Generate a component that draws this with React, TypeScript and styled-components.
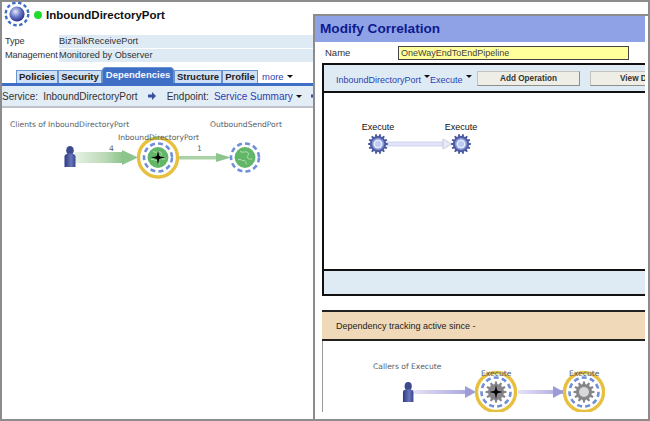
import React from 'react';
import styled, { createGlobalStyle } from 'styled-components';

const GlobalStyle = createGlobalStyle`
  html, body {
    margin: 0;
    padding: 0;
    background: #fff;
  }
  body {
    font-family: "Liberation Sans", Arial, sans-serif;
    color: #222;
  }
`;

const Frame = styled.div`
  width: 650px;
  height: 421px;
  box-sizing: border-box;
  display: flex;
  border: 2px solid #8c8c8c;
  background: #fff;
  overflow: hidden;
`;

const LeftPane = styled.div`
  width: 311px;
  flex: none;
  overflow: hidden;
`;

const Header = styled.div`
  height: 29px;
  display: flex;
  align-items: center;
  padding: 0 0 4px 2px;
  box-sizing: border-box;
`;

const StatusDot = styled.span`
  width: 8px;
  height: 8px;
  border-radius: 50%;
  background: #1fdc2c;
  margin: 0 4px 0 4px;
`;

const Title = styled.h1`
  margin: 0;
  font-size: 11.5px;
  font-weight: 700;
  color: #111;
`;

const InfoList = styled.div`
  display: flex;
  flex-direction: column;
  gap: 1px;
  padding-top: 4px;
`;

const InfoRow = styled.div`
  height: 13px;
  display: flex;
  font-size: 9.2px;
  line-height: 13px;
`;

const InfoLabel = styled.div`
  width: 57px;
  padding-left: 3px;
  box-sizing: border-box;
  flex: none;
  color: #333;
  white-space: nowrap;
  letter-spacing: -0.1px;
`;

const InfoValue = styled.div`
  flex: 1;
  background: #deebf5;
  color: #333;
`;

const Tabs = styled.div`
  display: flex;
  align-items: flex-end;
  height: 18px;
  margin-top: 3px;
  padding-left: 14px;
  border-bottom: 3px solid #3f6fc4;
`;

const Tab = styled.div<{ $active?: boolean; $width: number }>`
  width: ${(p) => p.$width}px;
  height: ${(p) => (p.$active ? 16 : 13)}px;
  box-sizing: border-box;
  flex: none;
  text-align: center;
  font-size: 9.5px;
  font-weight: 700;
  line-height: ${(p) => (p.$active ? 14 : 12)}px;
  color: ${(p) => (p.$active ? '#f2f6ff' : '#222')};
  background: ${(p) => (p.$active ? '#3f6fc4' : '#cfe0f4')};
  border: 1px solid #6a93d2;
  border-bottom: 0;
  border-radius: ${(p) => (p.$active ? '4px 4px 0 0' : '0')};
  white-space: nowrap;
`;

const MoreLink = styled.span`
  margin: 0 0 0 4px;
  font-size: 9.5px;
  line-height: 13px;
  color: #2c3fb0;
`;

const Caret = styled.span`
  display: inline-block;
  width: 0;
  height: 0;
  margin-left: 3px;
  vertical-align: 2px;
  border-left: 3px solid transparent;
  border-right: 3px solid transparent;
  border-top: 3px solid #111;
`;

const ServiceBar = styled.div`
  height: 20px;
  display: flex;
  align-items: center;
  background: #e3edf6;
  border-bottom: 2px solid #bfc4cc;
  font-size: 10px;
  color: #333;
  white-space: nowrap;
`;

const BarText = styled.span<{ $left: number }>`
  margin-left: ${(p) => p.$left}px;
`;

const BarLink = styled(BarText)`
  color: #2c3fb0;
`;

const BarArrow = styled.svg<{ $left: number }>`
  width: 8px;
  height: 8px;
  flex: none;
  margin-left: ${(p) => p.$left}px;
`;

const LeftDiagram = styled.svg`
  display: block;
  width: 311px;
  height: 100px;
  margin-top: 7px;
`;

const RightColumn = styled.div`
  flex: 1;
  min-width: 0;
  padding-top: 12px;
`;

const ModalWindow = styled.div`
  height: 100%;
  box-sizing: border-box;
  border-top: 2px solid #8c8c8c;
  border-left: 2px solid #8c8c8c;
  padding-right: 3px;
  overflow: hidden;
`;

const TitleBar = styled.div`
  height: 26px;
  background: #8fa2e6;
  color: #0d1a8f;
  font-size: 13.6px;
  font-weight: 700;
  line-height: 25px;
  padding-left: 5px;
`;

const NameRow = styled.div`
  height: 21px;
  display: flex;
  align-items: flex-start;
  padding: 4px 0 0 10px;
  box-sizing: border-box;
  font-size: 9.5px;
  line-height: 14px;
`;

const NameLabel = styled.label`
  width: 73px;
  flex: none;
  color: #333;
`;

const NameInput = styled.div`
  width: 231px;
  height: 14px;
  box-sizing: border-box;
  background: #ffff9c;
  border: 1px solid #444;
  color: #444;
  font-size: 9px;
  line-height: 12px;
  padding-left: 2px;
`;

const Panel = styled.div`
  margin-left: 7px;
  border: 2px solid #111;
  border-right: 0;
  overflow: hidden;
`;

const PanelToolbar = styled.div`
  height: 26px;
  display: flex;
  align-items: center;
  padding-left: 12px;
  background: #deebf5;
  border-bottom: 2px solid #111;
  font-size: 9px;
  color: #2c3fb0;
  white-space: nowrap;
`;

const ToolbarLink = styled.span<{ $width: number }>`
  width: ${(p) => p.$width}px;
  flex: none;
  padding-top: 3px;
`;

const ToolbarCaret = styled(Caret)`
  vertical-align: 5px;
`;

const ActionButton = styled.button<{ $left: number }>`
  width: 103px;
  height: 15px;
  flex: none;
  margin-left: ${(p) => p.$left}px;
  padding: 0;
  background: #eeeee6;
  border: 1px solid #c4c4bc;
  border-right-color: #8f8f8a;
  border-bottom-color: #8f8f8a;
  font-family: inherit;
  font-size: 8.2px;
  font-weight: 700;
  color: #333;
`;

const ClippedButton = styled(ActionButton)`
  text-align: left;
  padding-left: 29px;
`;

const PanelCanvas = styled.svg`
  display: block;
  width: 330px;
  height: 176px;
  border-bottom: 2px solid #111;
`;

const PanelFooter = styled.div`
  height: 23px;
  background: #deebf5;
`;

const TrackingBar = styled.div`
  margin: 14px 0 0 7px;
  height: 27px;
  display: flex;
  align-items: center;
  padding-left: 14px;
  background: #efd9b8;
  border-top: 2px solid #222;
  border-bottom: 2px solid #222;
  font-size: 9px;
  color: #222;
`;

const CallerDiagram = styled.svg`
  display: block;
  margin-left: 7px;
  width: 323px;
  height: 71px;
  border-left: 1px solid #9a9a9a;
`;

const DiagramLabel = styled.text`
  font-family: "DejaVu Sans", Verdana, sans-serif;
  font-size: 7.6px;
  fill: #55606a;
`;

const ExecuteLabel = styled.text`
  font-family: "Liberation Sans", Arial, sans-serif;
  font-size: 9px;
  fill: #111;
  text-anchor: middle;
`;

const gearPath = (cx: number, cy: number, outer: number, inner: number, teeth: number) => {
  const points: string[] = [];
  const step = (Math.PI * 2) / teeth;
  for (let i = 0; i < teeth; i++) {
    const a = i * step;
    [
      [-0.32, inner],
      [-0.18, outer],
      [0.18, outer],
      [0.32, inner],
    ].forEach(([k, r]) => {
      const t = a + k * step;
      points.push(`${(cx + Math.cos(t) * r).toFixed(2)},${(cy + Math.sin(t) * r).toFixed(2)}`);
    });
  }
  return points.join(' ');
};

const ArrowGlyph = ({ left }: { left: number }) => (
  <BarArrow $left={left} viewBox="0 0 8 8">
    <path d="M0 2.5h4V0l4 4-4 4V5.5H0z" fill="#34519c" />
  </BarArrow>
);

const Person = ({ x, y, scale = 1 }: { x: number; y: number; scale?: number }) => (
  <g transform={`translate(${x} ${y}) scale(${scale})`}>
    <ellipse cx="6" cy="4.5" rx="3.8" ry="4.5" fill="#3d4a8e" />
    <path d="M0.5 10.5c0-2 2-3 5.500-3s5.500 1 5.500 3V21H0.500z" fill="url(#personFill)" />
  </g>
);

const GearIcon = ({ cx, cy }: { cx: number; cy: number }) => (
  <g>
    <polygon points={gearPath(cx, cy, 10, 8, 14)} fill="#4c5aa0" />
    <circle cx={cx} cy={cy} r="6.2" fill="#8294d6" />
    <circle cx={cx} cy={cy} r="4.6" fill="#e4ebfb" />
    <circle cx={cx} cy={cy} r="3" fill="#bccbf2" />
  </g>
);

const Crosshair = ({ cx, cy }: { cx: number; cy: number }) => (
  <g fill="#000">
    <polygon
      points={`${cx},${cy - 7} ${cx + 1.2},${cy - 1.2} ${cx + 7},${cy} ${cx + 1.2},${cy + 1.2} ${cx},${cy + 7} ${cx - 1.2},${cy + 1.2} ${cx - 7},${cy} ${cx - 1.2},${cy - 1.2}`}
    />
    <circle cx={cx} cy={cy} r="2" />
  </g>
);

const GlobeNode = ({ cx, cy, hub }: { cx: number; cy: number; hub?: boolean }) => (
  <g>
    {hub && <circle cx={cx} cy={cy} r="19.5" fill="#fff" stroke="#e8c040" strokeWidth="3.4" />}
    <circle cx={cx} cy={cy} r="14" fill="#fff" stroke="#6f90d8" strokeWidth="2.6" strokeDasharray="5 3.2" />
    <circle cx={cx} cy={cy} r="10.4" fill="#62b668" />
    <path
      d={`M${cx - 5} ${cy - 6}c3 2 6-1 8 1s-2 4 0 6 4-1 4 1M${cx - 7} ${cy + 2}c3-1 4 2 6 1s1 3 3 4`}
      fill="none"
      stroke="#b9e2b6"
      strokeWidth="0.9"
    />
    {hub && <Crosshair cx={cx} cy={cy} />}
  </g>
);

const CogNode = ({ cx, cy, busy }: { cx: number; cy: number; busy?: boolean }) => (
  <g>
    <circle cx={cx} cy={cy} r="19.5" fill="#fff" stroke="#e8c040" strokeWidth="3.4" />
    <circle cx={cx} cy={cy} r="14.5" fill="#fff" stroke="#6f90d8" strokeWidth="2.6" strokeDasharray="5 3.2" />
    <polygon points={gearPath(cx, cy, 10.5, 8, 12)} fill="#85858a" />
    <circle cx={cx} cy={cy} r="5" fill={busy ? '#8a8a90' : '#d8d8da'} />
    {busy && <Crosshair cx={cx} cy={cy} />}
  </g>
);

const Defs = () => (
  <defs>
    <linearGradient id="personFill" x1="0" x2="1" y1="0" y2="0">
      <stop offset="0" stopColor="#2c3a86" />
      <stop offset="0.6" stopColor="#6a76b8" />
      <stop offset="1" stopColor="#38458f" />
    </linearGradient>
    <linearGradient id="greenFade" x1="0" x2="1" y1="0" y2="0">
      <stop offset="0" stopColor="#e6f2e4" />
      <stop offset="0.65" stopColor="#b9d8b4" />
      <stop offset="1" stopColor="#8cc58c" />
    </linearGradient>
    <linearGradient id="purpleFade" x1="0" x2="1" y1="0" y2="0">
      <stop offset="0" stopColor="#e4e2f4" />
      <stop offset="1" stopColor="#a7a4dc" />
    </linearGradient>
  </defs>
);

const App: React.FC = () => {
  return (
    <>
      <GlobalStyle />
      <Frame>
        <LeftPane>
          <Header>
            <svg width="26" height="26" viewBox="0 0 26 26">
              <defs>
                <radialGradient id="globeFill" cx="0.4" cy="0.35" r="0.7">
                  <stop offset="0" stopColor="#e6e9fa" />
                  <stop offset="0.5" stopColor="#6a78c8" />
                  <stop offset="1" stopColor="#1f2a80" />
                </radialGradient>
              </defs>
              <circle cx="13" cy="12" r="11.3" fill="none" stroke="#3f6dc4" strokeWidth="2.4" strokeDasharray="3.4 2.6" />
              <circle cx="13" cy="12" r="7.6" fill="url(#globeFill)" />
            </svg>
            <StatusDot />
            <Title>InboundDirectoryPort</Title>
          </Header>
          <InfoList>
            <InfoRow>
              <InfoLabel>Type</InfoLabel>
              <InfoValue>BizTalkReceivePort</InfoValue>
            </InfoRow>
            <InfoRow>
              <InfoLabel>Management</InfoLabel>
              <InfoValue>Monitored by Observer</InfoValue>
            </InfoRow>
          </InfoList>
          <Tabs>
            <Tab $width={42}>Policies</Tab>
            <Tab $width={44}>Security</Tab>
            <Tab $width={72} $active>
              Dependencies
            </Tab>
            <Tab $width={48}>Structure</Tab>
            <Tab $width={36}>Profile</Tab>
            <MoreLink>
              more
              <Caret />
            </MoreLink>
          </Tabs>
          <ServiceBar>
            <BarText $left={0}>Service:</BarText>
            <BarText $left={5}>InboundDirectoryPort</BarText>
            <ArrowGlyph left={10} />
            <BarText $left={11}>Endpoint:</BarText>
            <BarLink $left={5}>
              Service Summary
              <Caret />
            </BarLink>
            <ArrowGlyph left={9} />
          </ServiceBar>
          <LeftDiagram viewBox="2 115 311 100">
            <Defs />
            <DiagramLabel x="10" y="127">Clients of InboundDirectoryPort</DiagramLabel>
            <DiagramLabel x="210" y="127">OutboundSendPort</DiagramLabel>
            <rect x="75" y="152" width="48" height="11" fill="url(#greenFade)" />
            <polygon points="122,150 122,165 138,157.500" fill="#8cc58c" />
            <rect x="179" y="156" width="38" height="3.500" fill="#a9d2a6" />
            <polygon points="216,153 216,162 231,157.500" fill="#8cc58c" />
            <Person x={64} y={146} />
            <GlobeNode cx={158} cy={157.500} hub />
            <GlobeNode cx={245} cy={157.500} />
            <DiagramLabel x="118" y="140">InboundDirectoryPort</DiagramLabel>
            <DiagramLabel x="109" y="151">4</DiagramLabel>
            <DiagramLabel x="197" y="151">1</DiagramLabel>
          </LeftDiagram>
        </LeftPane>
        <RightColumn>
          <ModalWindow>
            <TitleBar>Modify Correlation</TitleBar>
            <NameRow>
              <NameLabel>Name</NameLabel>
              <NameInput>OneWayEndToEndPipeline</NameInput>
            </NameRow>
            <Panel>
              <PanelToolbar>
                <ToolbarLink $width={94}>
                  InboundDirectoryPort
                  <ToolbarCaret />
                </ToolbarLink>
                <ToolbarLink $width={35}>
                  Execute
                  <ToolbarCaret />
                </ToolbarLink>
                <ActionButton $left={12}>Add Operation</ActionButton>
                <ClippedButton $left={10}>View Details</ClippedButton>
              </PanelToolbar>
              <PanelCanvas viewBox="324 93 330 176">
                <Defs />
                <ExecuteLabel x="378" y="130">Execute</ExecuteLabel>
                <ExecuteLabel x="461" y="130">Execute</ExecuteLabel>
                <rect x="387" y="142" width="58" height="4" fill="#e2e5f7" stroke="#b8bfe8" strokeWidth="0.6" />
                <polygon points="443,139 443,149 452,144" fill="#e8eaf6" stroke="#b0b6d8" strokeWidth="0.6" />
                <GearIcon cx={378} cy={144} />
                <GearIcon cx={461} cy={144} />
              </PanelCanvas>
              <PanelFooter />
            </Panel>
            <TrackingBar>Dependency tracking active since -</TrackingBar>
            <CallerDiagram viewBox="323 339 323 71">
              <Defs />
              <DiagramLabel x="373" y="367">Callers of Execute</DiagramLabel>
              <rect x="413" y="388" width="58" height="4" fill="url(#purpleFade)" />
              <polygon points="465,384 465,396 476,390" fill="#9d9ad8" />
              <rect x="518" y="388" width="48" height="4" fill="url(#purpleFade)" />
              <polygon points="553,384 553,396 564,390" fill="#9d9ad8" />
              <Person x={402.500} y={380} scale={0.95} />
              <CogNode cx={496} cy={390} busy />
              <CogNode cx={584} cy={390} />
              <DiagramLabel x="481" y="374">Execute</DiagramLabel>
              <DiagramLabel x="569" y="374">Execute</DiagramLabel>
            </CallerDiagram>
          </ModalWindow>
        </RightColumn>
      </Frame>
    </>
  );
};

export default App;
